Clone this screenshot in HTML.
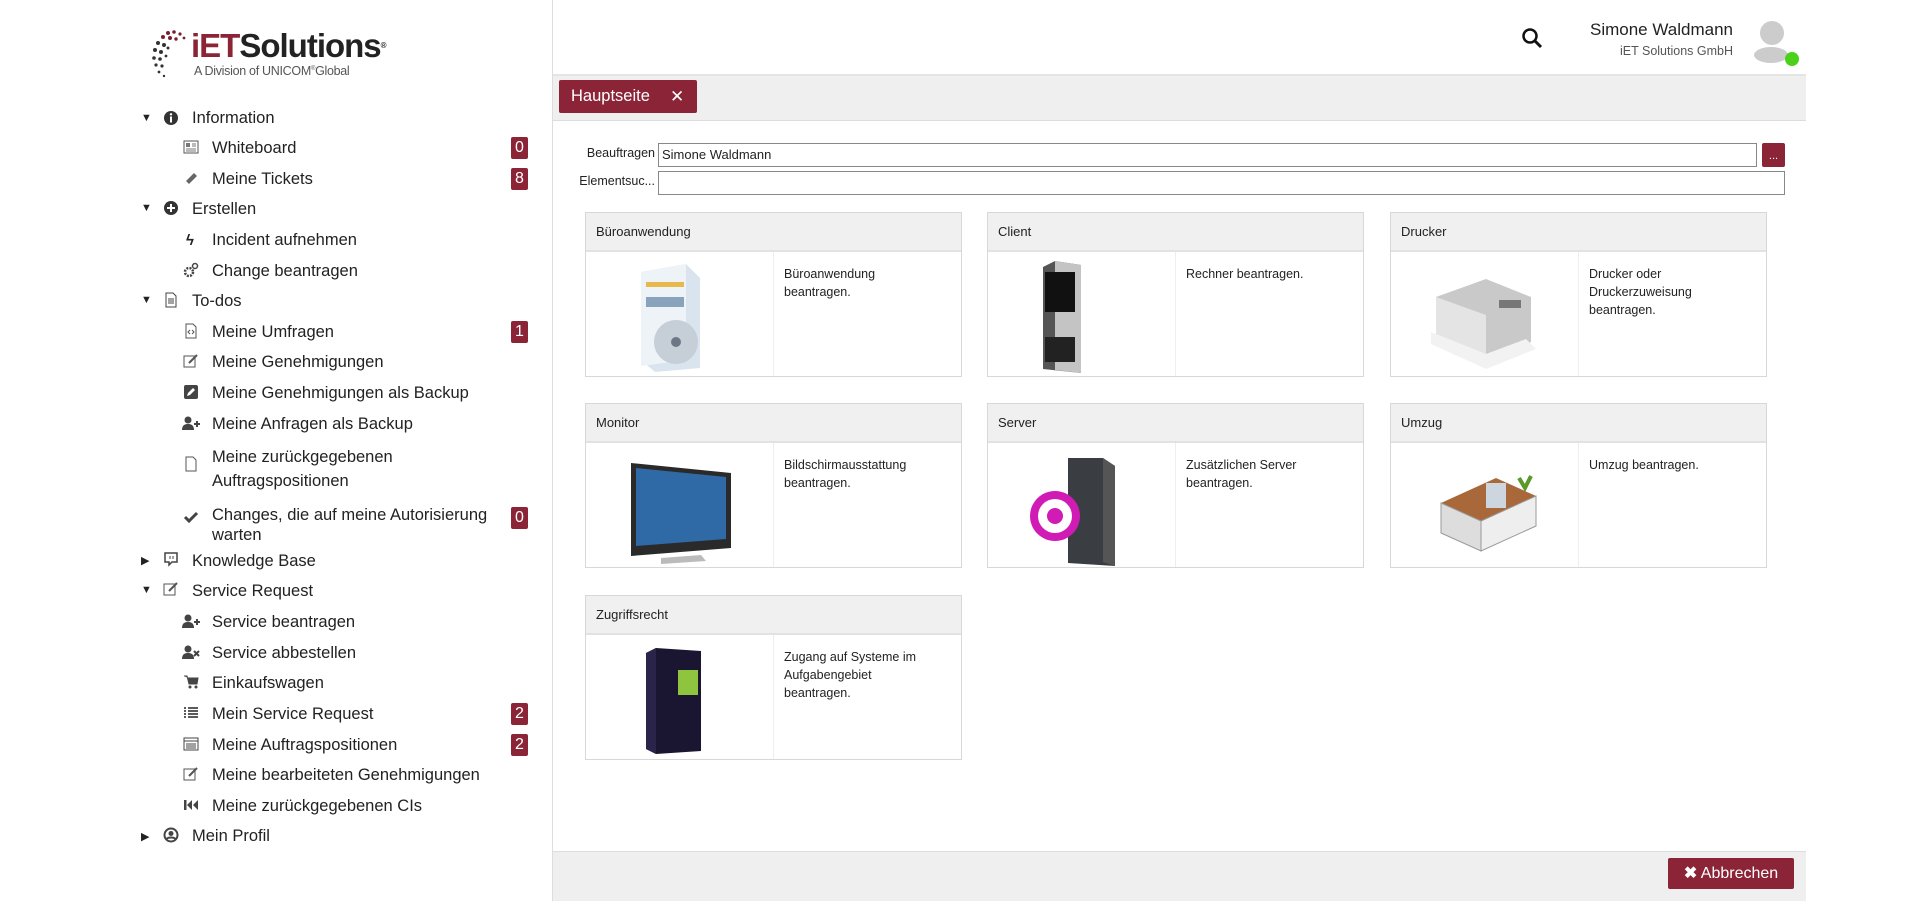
<!DOCTYPE html>
<html><head><meta charset="utf-8"><style>
*{box-sizing:border-box;margin:0;padding:0}
body{width:1920px;height:901px;position:relative;background:#fff;font-family:"Liberation Sans",sans-serif;color:#222;overflow:hidden}
.a{position:absolute}
.side{left:0;top:0;width:553px;height:901px;border-right:1px solid #ddd}
.r{position:absolute;font-size:16.5px;line-height:19px;color:#222;white-space:nowrap}
.tri{position:absolute;font-size:11px;color:#222}
.ic{position:absolute;width:16px;height:16px}
.badge{position:absolute;left:511px;width:17px;height:22px;background:#8b2436;color:#fff;font-size:16px;line-height:22px;text-align:center;border-radius:2px}
.card{position:absolute;width:377px;height:165px;border:1px solid #d8d8d8;background:#fff}
.card .h{height:39px;background:#f0f0f0;border-bottom:2px solid #e2e2e2;font-size:13px;line-height:37px;padding-left:10px}
.card .im{position:absolute;left:0;top:39px;width:188px;height:124px;border-right:1px solid #eee}
.card .d{position:absolute;left:198px;top:52px;font-size:12.5px;line-height:18px;width:145px}
</style></head><body>
<div class="a side"></div>
<!-- logo -->
<svg class="a" style="left:148px;top:28px" width="45" height="55" viewBox="0 0 45 55">
<g fill="#7a2030"><circle cx="20" cy="5" r="2"/><circle cx="26" cy="4" r="1.8"/><circle cx="32" cy="6" r="1.6"/><circle cx="15" cy="9" r="2"/><circle cx="22" cy="10" r="2"/><circle cx="28" cy="11" r="1.7"/><circle cx="36" cy="10" r="1.4"/></g>
<g fill="#333"><circle cx="10" cy="15" r="2"/><circle cx="16" cy="17" r="2"/><circle cx="7" cy="22" r="2"/><circle cx="13" cy="24" r="2"/><circle cx="6" cy="30" r="1.8"/><circle cx="12" cy="31" r="1.8"/><circle cx="8" cy="37" r="1.6"/><circle cx="14" cy="38" r="1.6"/><circle cx="11" cy="44" r="1.4"/><circle cx="16" cy="48" r="1.2"/><circle cx="20" cy="20" r="1.5"/><circle cx="18" cy="28" r="1.4"/></g></svg>
<div class="a" style="left:191px;top:28px;font-size:33px;font-weight:bold;letter-spacing:-1px;line-height:36px"><span style="color:#8b2436">iET</span><span style="color:#222">Solutions</span><span style="font-size:8px;vertical-align:top">®</span></div>
<div class="a" style="left:194px;top:64px;font-size:12.5px;color:#555;letter-spacing:-0.3px">A Division of UNICOM<sup style="font-size:6px">®</sup>Global</div>

<!-- sidebar items -->
<div class="tri" style="left:141px;top:112px">▼</div><svg class="ic" style="left:163px;top:110px" viewBox="0 0 16 16"><circle cx="8" cy="8" r="7" fill="#333"/><rect x="7" y="6.5" width="2" height="6" fill="#fff"/><circle cx="8" cy="4.3" r="1.2" fill="#fff"/></svg><div class="r" style="left:192px;top:109px">Information</div>
<svg class="ic" style="left:183px;top:139px" viewBox="0 0 16 16"><rect x="1" y="2" width="14" height="12" fill="none" stroke="#555"/><rect x="3" y="4" width="4" height="4" fill="#777"/><path d="M9 5h4M9 7h4M3 10h10M3 12h10" stroke="#777"/></svg><div class="r" style="left:212px;top:139px">Whiteboard</div><div class="badge" style="top:137px">0</div>
<svg class="ic" style="left:183px;top:170px" viewBox="0 0 16 16"><path d="M3 11 L11 3 L14 6 L6 14Z" fill="#666"/></svg><div class="r" style="left:212px;top:170px">Meine Tickets</div><div class="badge" style="top:168px">8</div>
<div class="tri" style="left:141px;top:202px">▼</div><svg class="ic" style="left:163px;top:200px" viewBox="0 0 16 16"><circle cx="8" cy="8" r="7" fill="#333"/><path d="M8 4v8M4 8h8" stroke="#fff" stroke-width="2"/></svg><div class="r" style="left:192px;top:200px">Erstellen</div>
<div class="r" style="left:186px;top:231px;font-size:15px;font-weight:bold">ϟ</div><div class="r" style="left:212px;top:231px">Incident aufnehmen</div>
<svg class="ic" style="left:183px;top:262px" viewBox="0 0 16 16"><circle cx="6" cy="10" r="4" fill="none" stroke="#444" stroke-width="2.5" stroke-dasharray="2 1.2"/><circle cx="12" cy="4" r="2.5" fill="none" stroke="#444" stroke-width="1.5"/></svg><div class="r" style="left:212px;top:262px">Change beantragen</div>
<div class="tri" style="left:141px;top:294px">▼</div><svg class="ic" style="left:163px;top:292px" viewBox="0 0 16 16"><path d="M3 1h7l3 3v11H3Z" fill="none" stroke="#444"/><path d="M5 7h6M5 9h6M5 11h6" stroke="#444"/></svg><div class="r" style="left:192px;top:292px">To-dos</div>
<svg class="ic" style="left:183px;top:323px" viewBox="0 0 16 16"><path d="M3 1h7l3 3v11H3Z" fill="none" stroke="#555"/><path d="M7 7l-2 2 2 2M9 7l2 2-2 2" stroke="#555" fill="none"/></svg><div class="r" style="left:212px;top:323px">Meine Umfragen</div><div class="badge" style="top:321px">1</div>
<svg class="ic" style="left:183px;top:353px" viewBox="0 0 16 16"><rect x="1" y="3" width="11" height="11" fill="none" stroke="#555"/><path d="M6 10l8-8" stroke="#555" stroke-width="2"/></svg><div class="r" style="left:212px;top:353px">Meine Genehmigungen</div>
<svg class="ic" style="left:183px;top:384px" viewBox="0 0 16 16"><rect x="1" y="1" width="14" height="14" rx="2" fill="#444"/><path d="M4 12l1-3 5-5 2 2-5 5Z" fill="#fff"/></svg><div class="r" style="left:212px;top:384px">Meine Genehmigungen als Backup</div>
<svg class="ic" style="left:181px;top:415px;width:20px" viewBox="0 0 20 16"><circle cx="7" cy="5" r="3.5" fill="#444"/><path d="M1 15c0-5 3-6 6-6s6 1 6 6Z" fill="#444"/><path d="M16 6v6M13 9h6" stroke="#444" stroke-width="2"/></svg><div class="r" style="left:212px;top:415px">Meine Anfragen als Backup</div>
<svg class="ic" style="left:183px;top:456px" viewBox="0 0 16 16"><path d="M3 1h7l3 3v11H3Z" fill="none" stroke="#555"/></svg><div class="r" style="left:212px;top:445px;line-height:24px">Meine zurückgegebenen<br>Auftragspositionen</div>
<svg class="ic" style="left:183px;top:509px" viewBox="0 0 16 16"><path d="M2 8l4 4 8-8" stroke="#444" stroke-width="3" fill="none"/></svg><div class="r" style="left:212px;top:505px;line-height:20px">Changes, die auf meine Autorisierung<br>warten</div><div class="badge" style="top:507px">0</div>
<div class="tri" style="left:141px;top:554px">▶</div><svg class="ic" style="left:163px;top:551px" viewBox="0 0 16 16"><path d="M2 2h12v9H9l-3 3v-3H2Z" fill="none" stroke="#444" stroke-width="1.5"/><path d="M7 5v3M10 5v3" stroke="#444"/></svg><div class="r" style="left:192px;top:552px">Knowledge Base</div>
<div class="tri" style="left:141px;top:584px">▼</div><svg class="ic" style="left:163px;top:581px" viewBox="0 0 16 16"><rect x="1" y="3" width="11" height="11" fill="none" stroke="#555"/><path d="M6 10l8-8" stroke="#555" stroke-width="2"/></svg><div class="r" style="left:192px;top:582px">Service Request</div>
<svg class="ic" style="left:181px;top:613px;width:20px" viewBox="0 0 20 16"><circle cx="7" cy="5" r="3.5" fill="#444"/><path d="M1 15c0-5 3-6 6-6s6 1 6 6Z" fill="#444"/><path d="M16 6v6M13 9h6" stroke="#444" stroke-width="2"/></svg><div class="r" style="left:212px;top:613px">Service beantragen</div>
<svg class="ic" style="left:181px;top:644px;width:20px" viewBox="0 0 20 16"><circle cx="7" cy="5" r="3.5" fill="#444"/><path d="M1 15c0-5 3-6 6-6s6 1 6 6Z" fill="#444"/><path d="M13 7l5 5M18 7l-5 5" stroke="#444" stroke-width="2"/></svg><div class="r" style="left:212px;top:644px">Service abbestellen</div>
<svg class="ic" style="left:183px;top:674px" viewBox="0 0 16 16"><path d="M1 2h3l2 8h8l1-6H5" fill="#444" stroke="#444"/><circle cx="7" cy="13" r="1.5" fill="#444"/><circle cx="13" cy="13" r="1.5" fill="#444"/></svg><div class="r" style="left:212px;top:674px">Einkaufswagen</div>
<svg class="ic" style="left:183px;top:705px" viewBox="0 0 16 16"><path d="M1 3h2M5 3h10M1 6h2M5 6h10M1 9h2M5 9h10M1 12h2M5 12h10" stroke="#444" stroke-width="1.8"/></svg><div class="r" style="left:212px;top:705px">Mein Service Request</div><div class="badge" style="top:703px">2</div>
<svg class="ic" style="left:183px;top:736px" viewBox="0 0 16 16"><rect x="1" y="2" width="14" height="12" fill="none" stroke="#444"/><path d="M1 5h14M3 8h10M3 10h10M3 12h10" stroke="#444"/></svg><div class="r" style="left:212px;top:736px">Meine Auftragspositionen</div><div class="badge" style="top:734px">2</div>
<svg class="ic" style="left:183px;top:766px" viewBox="0 0 16 16"><rect x="1" y="3" width="11" height="11" fill="none" stroke="#555"/><path d="M6 10l8-8" stroke="#555" stroke-width="2"/></svg><div class="r" style="left:212px;top:766px">Meine bearbeiteten Genehmigungen</div>
<svg class="ic" style="left:183px;top:797px" viewBox="0 0 16 16"><rect x="1" y="3" width="2.5" height="10" fill="#444"/><path d="M9 3L4 8l5 5ZM15 3l-5 5 5 5Z" fill="#444"/></svg><div class="r" style="left:212px;top:797px">Meine zurückgegebenen CIs</div>
<div class="tri" style="left:141px;top:830px">▶</div><svg class="ic" style="left:163px;top:827px" viewBox="0 0 16 16"><circle cx="8" cy="8" r="6.5" fill="none" stroke="#444" stroke-width="2"/><circle cx="8" cy="6.5" r="2.5" fill="#444"/><path d="M3.5 12c1.5-2 7.5-2 9 0" stroke="#444" stroke-width="2" fill="none"/></svg><div class="r" style="left:192px;top:827px">Mein Profil</div>

<!-- header right -->
<svg class="a" style="left:1521px;top:27px" width="22" height="22" viewBox="0 0 22 22"><circle cx="9" cy="9" r="6.5" fill="none" stroke="#111" stroke-width="2.5"/><path d="M14 14l6 6" stroke="#111" stroke-width="3"/></svg>
<div class="a" style="right:187px;top:20px;font-size:17px;color:#222;text-align:right">Simone Waldmann</div>
<div class="a" style="right:187px;top:44px;font-size:12.5px;color:#555;text-align:right">iET Solutions GmbH</div>
<div class="a" style="left:1760px;top:21px;width:24px;height:24px;border-radius:50%;background:#ccc"></div>
<div class="a" style="left:1754px;top:47px;width:34px;height:16px;border-radius:50%;background:#ccc"></div>
<div class="a" style="left:1785px;top:52px;width:14px;height:14px;border-radius:50%;background:#4cd11a"></div>

<!-- tab bar -->
<div class="a" style="left:553px;top:74px;width:1253px;height:47px;background:#efefef;border-top:2px solid #e4e4e4;border-bottom:1px solid #ddd"></div>
<div class="a" style="left:559px;top:80px;width:138px;height:33px;background:#8b2436;color:#fff;font-size:16.5px;line-height:33px;padding-left:12px;border-radius:2px">Hauptseite<span style="position:absolute;left:111px;font-size:17px">✕</span></div>

<!-- form -->
<div class="a" style="left:575px;top:146px;width:80px;text-align:right;font-size:12.5px">Beauftragen</div>
<div class="a" style="left:658px;top:143px;width:1099px;height:24px;border:1px solid #888;font-size:13px;line-height:22px;padding-left:3px">Simone Waldmann</div>
<div class="a" style="left:1762px;top:143px;width:23px;height:24px;background:#8b2436;color:#fff;font-size:11px;text-align:center;line-height:26px;border-radius:2px">...</div>
<div class="a" style="left:560px;top:174px;width:95px;text-align:right;font-size:12.5px">Elementsuc...</div>
<div class="a" style="left:658px;top:171px;width:1127px;height:24px;border:1px solid #888"></div>

<!-- cards -->
<div class="card" style="left:585px;top:212px"><div class="h">Büroanwendung</div><div class="im"><svg width="188" height="124" viewBox="0 0 188 124"><path d="M55 20l45-8 14 14v90l-45 4-14-12Z" fill="#d9e4ef"/><path d="M55 20l45-8v96l-45 6Z" fill="#eef3f8"/><rect x="60" y="30" width="38" height="5" fill="#e6b94a"/><rect x="60" y="45" width="38" height="10" fill="#8aa3bd"/><circle cx="90" cy="90" r="22" fill="#c6ced8"/><circle cx="90" cy="90" r="5" fill="#6b7785"/></svg></div><div class="d">Büroanwendung beantragen.</div></div>
<div class="card" style="left:987px;top:212px"><div class="h">Client</div><div class="im"><svg width="188" height="124" viewBox="0 0 188 124"><path d="M55 15l12-6 26 4v108l-38-4Z" fill="#555"/><path d="M67 9l26 4v108l-26-3Z" fill="#c4c4c4"/><rect x="57" y="20" width="30" height="40" fill="#111"/><rect x="57" y="85" width="30" height="25" fill="#222"/></svg></div><div class="d">Rechner beantragen.</div></div>
<div class="card" style="left:1390px;top:212px"><div class="h">Drucker</div><div class="im"><svg width="188" height="124" viewBox="0 0 188 124"><path d="M45 45l50-18 45 18v45l-50 20-45-20Z" fill="#c9c9c9"/><path d="M45 45l50 18v47l-50-20Z" fill="#e4e4e4"/><path d="M40 80l55 22 40-15 10 10-50 20-55-25Z" fill="#f2f2f2"/><rect x="108" y="48" width="22" height="8" fill="#777"/></svg></div><div class="d">Drucker oder Druckerzuweisung beantragen.</div></div>
<div class="card" style="left:585px;top:403px"><div class="h">Monitor</div><div class="im"><svg width="188" height="124" viewBox="0 0 188 124"><path d="M45 20l100 10v75l-100 8Z" fill="#2a2a2a"/><path d="M50 25l90 9v62l-90 7Z" fill="#2f6aa6"/><path d="M75 115l40-3 5 6-45 3Z" fill="#bbb"/></svg></div><div class="d">Bildschirmausstattung beantragen.</div></div>
<div class="card" style="left:987px;top:403px"><div class="h">Server</div><div class="im"><svg width="188" height="124" viewBox="0 0 188 124"><path d="M80 15l35 0 12 8v100l-47-3Z" fill="#3a3d42"/><path d="M115 15l12 8v100l-12-4Z" fill="#555"/><circle cx="67" cy="73" r="25" fill="#d01bb5"/><circle cx="67" cy="73" r="17" fill="#fff"/><circle cx="67" cy="73" r="8" fill="#d01bb5"/></svg></div><div class="d">Zusätzlichen Server beantragen.</div></div>
<div class="card" style="left:1390px;top:403px"><div class="h">Umzug</div><div class="im"><svg width="188" height="124" viewBox="0 0 188 124"><path d="M50 60l55-25 40 18-55 25Z" fill="#a8683a"/><path d="M50 60l40 18v30l-40-18Z" fill="#ddd" stroke="#999"/><path d="M90 78l55-25v30l-55 25Z" fill="#eee" stroke="#999"/><rect x="95" y="40" width="20" height="25" fill="#cdd6de"/><path d="M128 35l6 10 6-12" stroke="#5a9a2a" stroke-width="4" fill="none"/></svg></div><div class="d">Umzug beantragen.</div></div>
<div class="card" style="left:585px;top:595px"><div class="h">Zugriffsrecht</div><div class="im"><svg width="188" height="124" viewBox="0 0 188 124"><path d="M60 18l10-5 45 3v100l-45 3-10-5Z" fill="#1a1530"/><path d="M60 18l10-5v106l-10-5Z" fill="#2b244a"/><rect x="92" y="35" width="20" height="25" fill="#8fc43e"/></svg></div><div class="d" style="width:140px">Zugang auf Systeme im Aufgabengebiet beantragen.</div></div>

<!-- bottom bar -->
<div class="a" style="left:553px;top:851px;width:1253px;height:50px;background:#efefef;border-top:1px solid #ddd"></div>
<div class="a" style="left:1668px;top:858px;width:126px;height:31px;background:#8b2436;color:#fff;font-size:16px;line-height:31px;text-align:center;border-radius:2px"><b>✖</b> Abbrechen</div>
</body></html>
